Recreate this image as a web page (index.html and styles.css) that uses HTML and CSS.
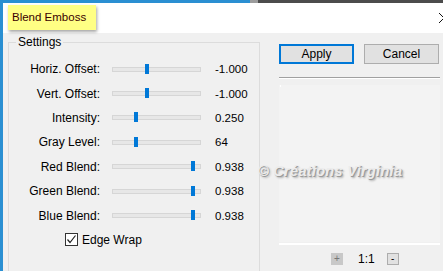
FILE: index.html
```html
<!DOCTYPE html>
<html lang="en">
<head>
    <meta charset="UTF-8">
    <title>Blend Emboss</title>
    <link rel="stylesheet" href="styles.css">
</head>
<body>
    <div class="window">
        <!-- Title bar -->
        <div class="titlebar">
            <span class="title">Blend Emboss</span>
            <svg class="close" width="10" height="10" viewBox="0 0 10 10">
                <path d="M0 0 L10 10 M10 0 L0 10" stroke="#111" stroke-width="1"/>
            </svg>
        </div>

        <div class="client">
            <fieldset class="settings">
                <legend>Settings</legend>
                <div class="rows">
                    <span class="label">Horiz. Offset:</span>
                    <div class="track"><span class="thumb" style="left: 32px"></span></div>
                    <span class="value">-1.000</span>

                    <span class="label">Vert. Offset:</span>
                    <div class="track"><span class="thumb" style="left: 32px"></span></div>
                    <span class="value">-1.000</span>

                    <span class="label">Intensity:</span>
                    <div class="track"><span class="thumb" style="left: 21px"></span></div>
                    <span class="value">0.250</span>

                    <span class="label">Gray Level:</span>
                    <div class="track"><span class="thumb" style="left: 21px"></span></div>
                    <span class="value">64</span>

                    <span class="label">Red Blend:</span>
                    <div class="track"><span class="thumb" style="left: 78px"></span></div>
                    <span class="value">0.938</span>

                    <span class="label">Green Blend:</span>
                    <div class="track"><span class="thumb" style="left: 78px"></span></div>
                    <span class="value">0.938</span>

                    <span class="label">Blue Blend:</span>
                    <div class="track"><span class="thumb" style="left: 78px"></span></div>
                    <span class="value">0.938</span>
                </div>
                <label class="check">
                    <span class="box">
                        <svg width="11" height="11" viewBox="0 0 11 11">
                            <path d="M1.5 5.5 L4 8.5 L9.5 1.5" fill="none" stroke="#222" stroke-width="1.2"/>
                        </svg>
                    </span>
                    Edge Wrap
                </label>
            </fieldset>

            <div class="side">
                <div class="buttons">
                    <button class="btn default">Apply</button>
                    <button class="btn">Cancel</button>
                </div>
                <div class="divider"></div>
                <div class="preview"><span class="dot"></span></div>
                <div class="zoombar">
                    <span class="zbtn plus">+</span>
                    <span class="ratio">1:1</span>
                    <span class="zbtn minus">-</span>
                </div>
            </div>

            <!-- watermark on top of the dialog -->
            <div class="watermark">&copy; Créations Virginia</div>
        </div>
    </div>
</body>
</html>
```

FILE: styles.css
```css
body {
    margin: 0;
    width: 443px;
    height: 271px;
    overflow: hidden;
    font-family: "Liberation Sans", Arial, sans-serif;
    font-size: 12px;
    color: #000;
    background: linear-gradient(to right, #2a8fd2 250px, #9c9c9c 250px, #9c9c9c 258px, #4c4c4c 258px);
}

.window {
    margin: 3px 0 0 3px;
    height: 268px;
    background-color: #f0f0f0;
    overflow: hidden;
}

.titlebar {
    height: 30px;
    background-color: #fff;
    display: flex;
    align-items: flex-start;
    justify-content: space-between;
}

.title {
    margin: 2px 0 0 5px;
    height: 25px;
    line-height: 25px;
    padding: 0 10px 0 4px;
    font-size: 11.5px;
    color: #3a0000;
    background-color: #ffff84;
    box-shadow: 1px 2px 3px rgba(0, 0, 0, 0.35);
}

.close {
    margin: 10px -6px 0 0;
}

.client {
    position: relative;
    display: flex;
    padding-top: 2px;
}

/* Settings group */
.settings {
    margin: 0 0 0 5px;
    padding: 0;
    width: 250px;
    height: 250px;
    border: 1px solid #dcdcdc;
}

.settings legend {
    margin-left: 7px;
    padding: 0 2px;
    font-size: 12px;
    line-height: 14px;
}

.rows {
    display: grid;
    grid-template-columns: 91px 89px auto;
    grid-auto-rows: 24.4px;
    column-gap: 12px;
    align-items: center;
    padding-top: 8px;
}

.label {
    text-align: right;
}

.track {
    position: relative;
    height: 3px;
    background-color: #e7e7e7;
    border: 1px solid #d6d6d6;
}

.thumb {
    position: absolute;
    top: -4px;
    width: 4px;
    height: 10px;
    background-color: #0078d7;
}

.value {
    padding-left: 2px;
    font-size: 11.5px;
}

.check {
    display: flex;
    align-items: center;
    gap: 4px;
    margin: 5px 0 0 56px;
    height: 14px;
}

.box {
    display: flex;
    align-items: center;
    justify-content: center;
    width: 11px;
    height: 11px;
    border: 1px solid #333;
    background-color: #fff;
}

/* Right side */
.side {
    margin-left: 19px;
    width: 164px;
}

.buttons {
    display: flex;
    gap: 10px;
    margin-top: 9px;
}

.btn {
    width: 75px;
    height: 20px;
    padding: 0;
    font-family: inherit;
    font-size: 12px;
    background-color: #e1e1e1;
    border: 1px solid #adadad;
}

.btn.default {
    border: 2px solid #0078d7;
}

.divider {
    margin-top: 13px;
    width: 161px;
    height: 1px;
    background-color: #a0a0a0;
    border-bottom: 1px solid #fff;
}

.preview {
    margin-top: 6px;
    width: 161px;
    height: 157px;
    background-color: #f3f3f3;
}

.dot {
    display: block;
    margin: 3px 0 0 1px;
    width: 1px;
    height: 2px;
    background-color: #fff;
}

.zoombar {
    display: flex;
    align-items: center;
    height: 25px;
    padding-top: 1px;
    padding-left: 52px;
    border-top: 2px solid #fff;
    border-bottom: 1px solid #a0a0a0;
    width: 109px;
    margin-top: 1px;
}

.zbtn {
    width: 12px;
    height: 12px;
    line-height: 11px;
    text-align: center;
    font-size: 10px;
}

.plus {
    background-color: #c8c8c8;
    color: #777;
}

.minus {
    width: 10px;
    height: 10px;
    background-color: #e1e1e1;
    border: 1px solid #adadad;
    line-height: 9px;
}

.ratio {
    margin: 0 12px 0 15px;
    font-size: 12px;
}

.watermark {
    position: absolute;
    left: 255px;
    top: 130px;
    font-size: 14.5px;
    font-weight: bold;
    font-style: italic;
    letter-spacing: 0.3px;
    color: #ececec;
    text-shadow: 1px 1px 0 #9a9a9a, 2px 2px 2px #b0b0b0;
}
```
